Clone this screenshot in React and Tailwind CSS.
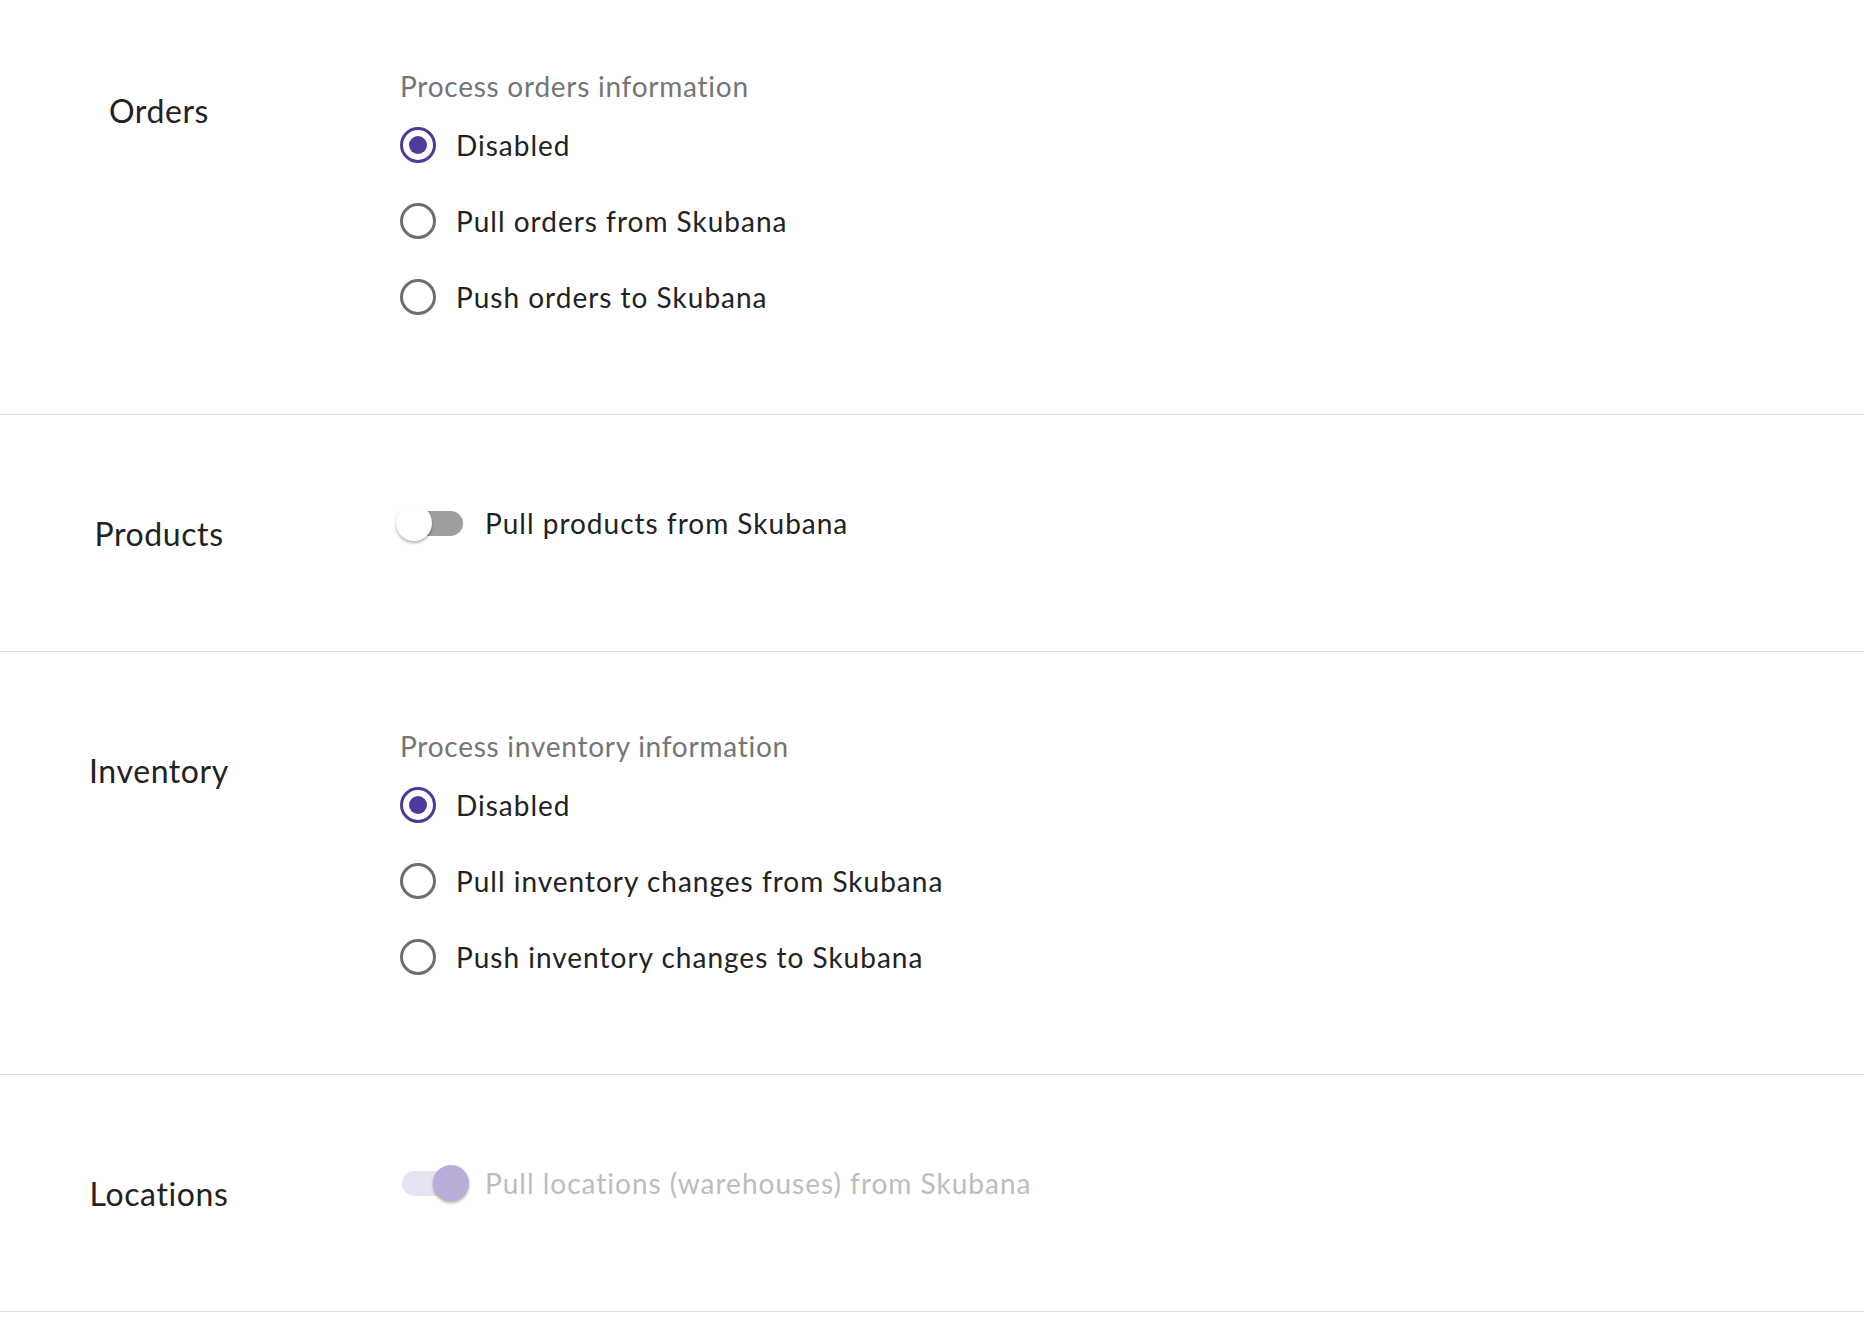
import React from "react";

const font = { fontFamily: "Lato, 'Noto Sans', sans-serif" };

function Radio({ checked, label }) {
  return (
    <div className="flex h-[76px] items-center">
      <span
        className={
          "flex h-[36px] w-[36px] items-center justify-center rounded-full border-[3.5px] " +
          (checked ? "border-[#4e3a9b]" : "border-[#6e6e6e]")
        }
      >
        {checked && <span className="h-[18px] w-[18px] rounded-full bg-[#4e3a9b]" />}
      </span>
      <span className="ml-[20px] text-[28px] leading-[36px] tracking-[1px] text-[#222222]">{label}</span>
    </div>
  );
}

function Toggle({ on, disabled, label }) {
  return (
    <div className="flex h-[40px] items-center">
      <span className="relative ml-[-4px] flex h-[40px] w-[73px] items-center">
        <span
          className={
            "ml-[6px] h-[25px] w-[61px] rounded-full " +
            (disabled ? "bg-[#e7e3f3]" : "bg-[#9e9e9e]")
          }
        />
        <span
          className={
            "absolute top-[2px] h-[36px] w-[36px] rounded-full shadow-[0_2px_3px_rgba(0,0,0,0.3)] " +
            (on ? "left-[37px] " : "left-0 ") +
            (disabled ? "bg-[#b9aed9]" : "bg-white")
          }
        />
      </span>
      <span
        className={
          "ml-[16px] text-[28px] leading-[36px] tracking-[1px] " +
          (disabled ? "text-[#bdbdbd]" : "text-[#222222]")
        }
      >
        {label}
      </span>
    </div>
  );
}

function Section({ title, first, children, tall }) {
  return (
    <div
      className={
        "flex border-b border-[#e0e0e0] " +
        (tall ? (first ? "h-[415px]" : "h-[423px]") : "h-[237px]")
      }
    >
      <div
        className={
          "w-[318px] shrink-0 text-center text-[32px] leading-[40px] tracking-[0.6px] text-[#222222] " +
          (first ? "pt-[91px]" : "pt-[99px]")
        }
      >
        {title}
      </div>
      <div className="pl-[82px]">{children}</div>
    </div>
  );
}

export default function App() {
  return (
    <div className="min-h-[1336px] w-[1864px] bg-white" style={font}>
      <Section title="Orders" first tall>
        <div className="pt-[67px]">
          <div className="h-[38px] text-[28px] leading-[38px] tracking-[0.75px] text-[#757575]">
            Process orders information
          </div>
          <div className="pt-[2px]">
            <Radio checked label="Disabled" />
            <Radio label="Pull orders from Skubana" />
            <Radio label="Push orders to Skubana" />
          </div>
        </div>
      </Section>
      <Section title="Products">
        <div className="pt-[88px]">
          <Toggle label="Pull products from Skubana" />
        </div>
      </Section>
      <Section title="Inventory" tall>
        <div className="pt-[75px]">
          <div className="h-[38px] text-[28px] leading-[38px] tracking-[0.75px] text-[#757575]">
            Process inventory information
          </div>
          <div className="pt-[2px]">
            <Radio checked label="Disabled" />
            <Radio label="Pull inventory changes from Skubana" />
            <Radio label="Push inventory changes to Skubana" />
          </div>
        </div>
      </Section>
      <Section title="Locations">
        <div className="pt-[88px]">
          <Toggle on disabled label="Pull locations (warehouses) from Skubana" />
        </div>
      </Section>
    </div>
  );
}
